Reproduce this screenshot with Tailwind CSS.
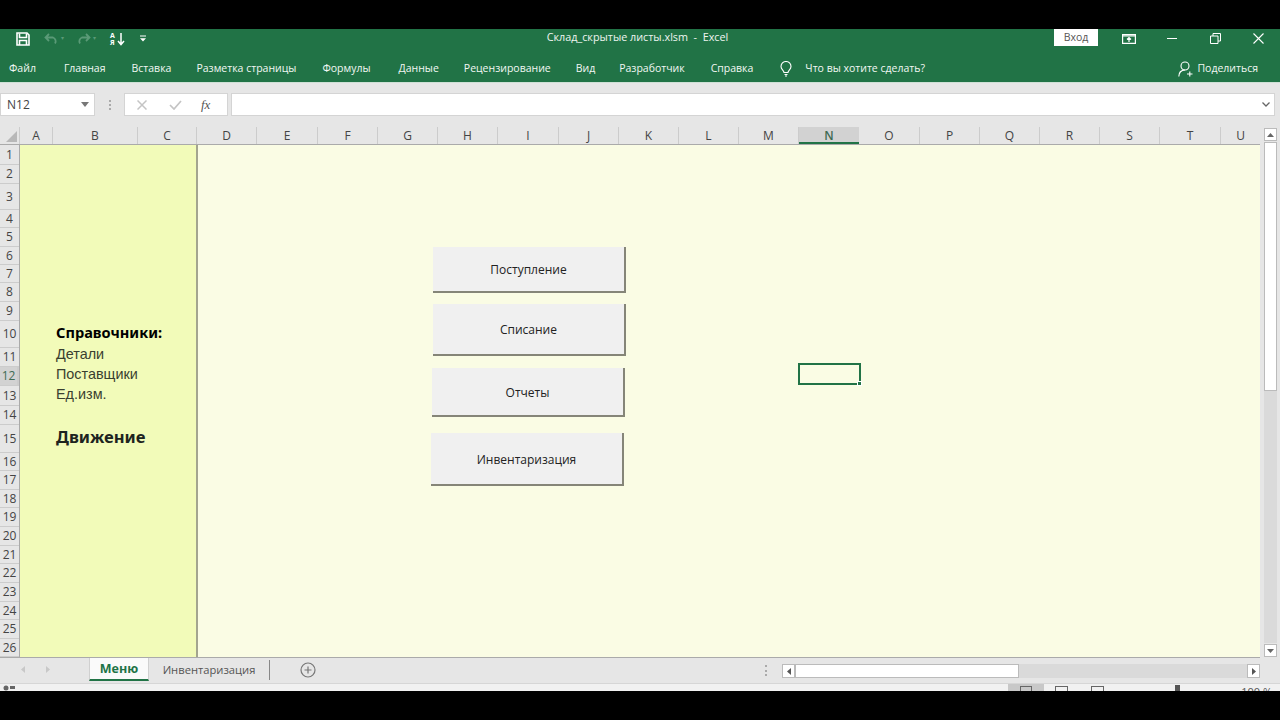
<!DOCTYPE html>
<html lang="ru">
<head>
<meta charset="utf-8"/>
<title>Склад_скрытые листы.xlsm - Excel</title>
<script src="https://cdn.jsdelivr.net/npm/@tailwindcss/browser@4"></script>
</head>
<body class="w-[1280px] h-[720px] overflow-hidden bg-black font-['Open_Sans',sans-serif]">
<div class="h-[29px] bg-black"></div>

<!-- title bar -->
<header class="h-[27px] bg-[#217346] text-white flex items-center relative pb-[9px] pt-[1px]">
  <div class="flex items-center w-[170px] pl-[16px] h-full">
    <svg class="w-[14px] h-[14px]" viewBox="0 0 14 14" fill="none" stroke="#fff" stroke-width="1.6"><path d="M1 1h10l2 2v10H1z"/><path d="M3.500 1.500v4h7v-4M3.500 13V8.500h7V13"/></svg>
    <svg class="w-[15px] h-[12px] ml-[14px]" viewBox="0 0 15 12" fill="none" stroke="#5a9a77" stroke-width="1.8"><path d="M5 1 1.500 4.500 5 8M2 4.500h7a4 4 0 0 1 2 6"/></svg>
    <span class="ml-[2px] text-[6px] text-[#5a9a77]">▾</span>
    <svg class="w-[15px] h-[12px] ml-[12px]" viewBox="0 0 15 12" fill="none" stroke="#5a9a77" stroke-width="1.8"><path d="M10 1l3.500 3.500L10 8M13 4.500H6a4 4 0 0 0-2 6"/></svg>
    <span class="ml-[2px] text-[6px] text-[#5a9a77]">▾</span>
    <div class="ml-[14px] flex items-center">
      <div class="flex flex-col text-[7px] leading-[7px] font-bold w-[7px]"><span>А</span><span>Я</span></div>
      <svg class="w-[8px] h-[14px]" viewBox="0 0 8 14" fill="none" stroke="#fff" stroke-width="1.5"><path d="M4 1v11M1 9l3 3.500L7 9"/></svg>
    </div>
    <svg class="w-[6px] h-[8px] ml-[15px]" viewBox="0 0 7 8" fill="#fff"><path d="M0 0h7v1.200H0zM0 3h7L3.500 7z"/></svg>
  </div>
  <div class="absolute left-0 top-0 w-[1275px] text-center text-[10.8px] text-[#eef5f0] pointer-events-none">Склад_скрытые листы.xlsm&nbsp; -&nbsp; Excel</div>
  <div class="ml-auto flex items-center h-full">
    <div class="w-[44px] h-[17px] self-start -mt-[1px] bg-white text-[#555] text-[10.5px] leading-[17px] text-center">Вход</div>
    <svg class="w-[14px] h-[10px] ml-[24px]" viewBox="0 0 14 10" fill="none" stroke="#fff" stroke-width="1.200"><path d="M.6.600h12.800v8.800H.6zM1 2h12"/><path d="M7 8V4M5 5.500 7 3.500l2 2"/></svg>
    <div class="w-[10px] h-px bg-white ml-[31px]"></div>
    <svg class="w-[11px] h-[11px] ml-[33px]" viewBox="0 0 11 11" fill="none" stroke="#fff"><path d="M.5 3h7.500v7.500H.5zM3 3V.5h7.500V8H8"/></svg>
    <svg class="w-[11px] h-[11px] ml-[32px] mr-[16px]" viewBox="0 0 11 11" stroke="#fff" stroke-width="1.100"><path d="M.5.500l10 10M10.500.500l-10 10"/></svg>
  </div>
</header>

<!-- ribbon tabs -->
<nav class="h-[26px] bg-[#217346] text-[#f1f7f3] text-[10.5px] flex items-center relative">
  <span class="ml-[9px]">Файл</span>
  <span class="ml-[28px]">Главная</span>
  <span class="ml-[26px]">Вставка</span>
  <span class="ml-[25px]">Разметка страницы</span>
  <span class="ml-[26px]">Формулы</span>
  <span class="ml-[28px]">Данные</span>
  <span class="ml-[25px]">Рецензирование</span>
  <span class="ml-[25px]">Вид</span>
  <span class="ml-[24px]">Разработчик</span>
  <span class="ml-[26px]">Справка</span>
  <svg class="w-[12px] h-[16px] ml-[27px]" viewBox="0 0 12 16" fill="none" stroke="#fff" stroke-width="1.100"><path d="M4 11.500C4 9.500 1 8.500 1 5.500a5 5 0 0 1 10 0c0 3-3 4-3 6zM4.500 13.500h3M5 15h2"/></svg>
  <span class="ml-[13px]">Что вы хотите сделать?</span>
  <div class="ml-auto mr-[22px] flex items-center gap-[4px]">
    <svg class="w-[15px] h-[16px]" viewBox="0 0 15 16" fill="none" stroke="#fff" stroke-width="1.100"><circle cx="7" cy="5" r="4"/><path d="M.8 15.500c0-4 2.500-6.500 6.200-6.500M9 13h5.500M11.800 10.500v5"/></svg>
    <span>Поделиться</span>
  </div>
</nav>

<!-- formula bar -->
<div class="h-[45px] bg-[#e6e6e6] flex items-start pt-[10px] border-t border-[#cfe0d6]">
  <div class="w-[95px] h-[23px] bg-white border border-[#d4d4d4] flex items-center justify-between pl-[6px] pr-[5px] text-[12px] text-[#444]">
    <span>N12</span>
    <svg class="w-[8px] h-[5px]" viewBox="0 0 8 5" fill="#777"><path d="M0 0h8L4 5z"/></svg>
  </div>
  <div class="w-[29px] h-[23px] flex flex-col items-center justify-center gap-[2px]">
    <i class="w-[2px] h-[2px] bg-[#aaa]"></i><i class="w-[2px] h-[2px] bg-[#aaa]"></i><i class="w-[2px] h-[2px] bg-[#aaa]"></i>
  </div>
  <div class="w-[104px] h-[23px] bg-white border border-[#d4d4d4] flex items-center">
    <svg class="w-[10px] h-[10px] ml-[12px]" viewBox="0 0 10 10" stroke="#c4c4c4" stroke-width="1.500"><path d="M.5.500l9 9M9.500.500l-9 9"/></svg>
    <svg class="w-[13px] h-[10px] ml-[22px]" viewBox="0 0 13 10" fill="none" stroke="#c4c4c4" stroke-width="1.700"><path d="M1 5l4 4 7-8"/></svg>
    <span class="ml-[19px] text-[13px] italic text-[#555] font-['Liberation_Serif',serif]">fx</span>
  </div>
  <div class="w-[1044px] h-[23px] ml-[3px] bg-white border border-[#d4d4d4] flex items-center justify-end pr-[4px]">
    <svg class="w-[8px] h-[5px]" viewBox="0 0 8 5" fill="none" stroke="#666" stroke-width="1.300"><path d="M.5.500 4 4 7.500.500"/></svg>
  </div>
</div>

<!-- sheet -->
<div class="h-[531px] bg-[#e6e6e6] flex relative text-[#444]">
  <div class="w-[1260px] shrink-0">
    <div class="h-[18px] flex text-[12px] leading-[17px] text-center border-b border-[#aaa]">
      <div class="w-[20px] relative border-r border-[#ccc]"><svg class="absolute right-[2px] bottom-[2px] w-[11px] h-[11px]" viewBox="0 0 11 11" fill="#b8b8b8"><path d="M11 0v11H0z"/></svg></div>
      <div class="w-[33px] border-r border-[#ccc]">A</div>
      <div class="w-[85px] border-r border-[#ccc]">B</div>
      <div class="w-[59px] border-r border-[#ccc]">C</div>
      <div class="w-[60px] border-r border-[#ccc]">D</div>
      <div class="w-[61px] border-r border-[#ccc]">E</div>
      <div class="w-[60px] border-r border-[#ccc]">F</div>
      <div class="w-[60px] border-r border-[#ccc]">G</div>
      <div class="w-[60px] border-r border-[#ccc]">H</div>
      <div class="w-[61px] border-r border-[#ccc]">I</div>
      <div class="w-[60px] border-r border-[#ccc]">J</div>
      <div class="w-[60px] border-r border-[#ccc]">K</div>
      <div class="w-[60px] border-r border-[#ccc]">L</div>
      <div class="w-[60px] border-r border-[#ccc]">M</div>
      <div class="w-[60px] bg-[#d2d2d2] text-[#3f6b52] font-semibold border-b-2 border-[#217346]">N</div>
      <div class="w-[61px] border-r border-[#ccc]">O</div>
      <div class="w-[60px] border-r border-[#ccc]">P</div>
      <div class="w-[60px] border-r border-[#ccc]">Q</div>
      <div class="w-[60px] border-r border-[#ccc]">R</div>
      <div class="w-[60px] border-r border-[#ccc]">S</div>
      <div class="w-[61px] border-r border-[#ccc]">T</div>
      <div class="w-[39px]">U</div>
    </div>
    <div class="h-[513px] flex border-b border-[#aaa]">
      <div class="w-[20px] shrink-0 text-[12px] text-center leading-none [&>div]:flex [&>div]:items-center [&>div]:justify-center [&>div]:border-b [&>div]:border-[#ccc] border-r border-[#aaa]">
        <div class="h-[20px]">1</div><div class="h-[19px]">2</div><div class="h-[26px]">3</div><div class="h-[18px]">4</div>
        <div class="h-[19px]">5</div><div class="h-[18px]">6</div><div class="h-[18px]">7</div><div class="h-[19px]">8</div>
        <div class="h-[19px]">9</div><div class="h-[27px]">10</div><div class="h-[19px]">11</div>
        <div class="h-[19px] bg-[#d2d2d2] text-[#3f6b52] border-r-2 border-r-[#217346]">12</div>
        <div class="h-[20px]">13</div><div class="h-[19px]">14</div><div class="h-[28px]">15</div><div class="h-[18px]">16</div>
        <div class="h-[19px]">17</div><div class="h-[18px]">18</div><div class="h-[19px]">19</div><div class="h-[19px]">20</div>
        <div class="h-[18px]">21</div><div class="h-[19px]">22</div><div class="h-[19px]">23</div><div class="h-[18px]">24</div>
        <div class="h-[19px]">25</div><div class="h-[18px]">26</div>
      </div>
      <div class="flex-1 flex bg-[#fafce4] relative">
        <aside class="w-[178px] h-full bg-[#f2fbb9] border-r-2 border-r-[#a3a58f] pl-[36px] pt-[176px] text-[#3a3f30]">
          <div class="h-[23px] font-['Noto_Sans',sans-serif] text-[14.6px] leading-[22px] font-bold text-black">Справочники:</div>
          <div class="h-[20px] font-['Liberation_Sans',sans-serif] text-[14.4px] leading-[20px]">Детали</div>
          <div class="h-[20px] font-['Liberation_Sans',sans-serif] text-[14.4px] leading-[20px]">Поставщики</div>
          <div class="h-[20px] font-['Liberation_Sans',sans-serif] text-[14.4px] leading-[20px]">Ед.изм.</div>
          <div class="mt-[21px] h-[24px] font-['Noto_Sans',sans-serif] text-[16.6px] leading-[24px] font-bold text-[#1d2420]">Движение</div>
        </aside>
        <!-- form buttons float over the sheet -->
        <div class="absolute left-[413px] top-[102px] w-[193px] h-[46px] pt-[1px] bg-[#f0f0f0] border-r-2 border-b-2 border-[#858578] flex items-center justify-center text-[12px] text-[#222]">Поступление</div>
        <div class="absolute left-[413px] top-[159px] w-[193px] h-[52px] pt-[1px] bg-[#f0f0f0] border-r-2 border-b-2 border-[#858578] flex items-center justify-center text-[12px] text-[#222]">Списание</div>
        <div class="absolute left-[412px] top-[223px] w-[193px] h-[49px] pt-[3px] bg-[#f0f0f0] border-r-2 border-b-2 border-[#858578] flex items-center justify-center text-[12px] text-[#222]">Отчеты</div>
        <div class="absolute left-[411px] top-[288px] w-[193px] h-[53px] pt-[3px] bg-[#f0f0f0] border-r-2 border-b-2 border-[#858578] flex items-center justify-center text-[12px] text-[#222]">Инвентаризация</div>
        <!-- active cell N12 -->
        <div class="absolute left-[778px] top-[218px] w-[63px] h-[22px] border-2 border-[#217346]">
          <i class="absolute -right-[3px] -bottom-[3px] w-[5px] h-[5px] bg-[#217346] border border-white"></i>
        </div>
      </div>
    </div>
  </div>
  <!-- vertical scrollbar -->
  <div class="w-[20px] flex flex-col items-end pr-[3px]">
    <div class="w-[13px] h-[13px] mt-[1px] bg-white border border-[#bbb] flex items-center justify-center"><svg class="w-[7px] h-[4px]" viewBox="0 0 7 4" fill="#666"><path d="M0 4h7L3.500 0z"/></svg></div>
    <div class="w-[13px] flex-1 bg-[#dadada] my-[1px]"><div class="h-[249px] bg-white border border-[#bbb]"></div></div>
    <div class="w-[13px] h-[13px] mb-[1px] bg-white border border-[#bbb] flex items-center justify-center"><svg class="w-[7px] h-[4px]" viewBox="0 0 7 4" fill="#666"><path d="M0 0h7L3.500 4z"/></svg></div>
  </div>
</div>

<!-- sheet tabs -->
<div class="h-[25px] bg-[#e6e6e6] flex items-start text-[11.2px]">
  <div class="w-[89px] h-[23px] flex items-center pl-[21px] gap-[21px]">
    <svg class="w-[4px] h-[7px]" viewBox="0 0 4 7" fill="#c8c8c8"><path d="M4 0v7L0 3.500z"/></svg>
    <svg class="w-[4px] h-[7px]" viewBox="0 0 4 7" fill="#c8c8c8"><path d="M0 0v7l4-3.500z"/></svg>
  </div>
  <div class="w-[60px] h-[23px] bg-[#fafafa] border-b-2 border-[#217346] border-x border-x-[#d0d0d0] text-[#217346] text-[12.5px] font-bold text-center leading-[22px]">Меню</div>
  <div class="w-[121px] h-[20px] mt-[2px] text-[#555] text-center leading-[20px] border-r border-[#888]">Инвентаризация</div>
  <svg class="w-[16px] h-[16px] ml-[30px] mt-[4px]" viewBox="0 0 16 16" fill="none" stroke="#777" stroke-width="1.200"><circle cx="8" cy="8" r="7"/><path d="M8 4.500v7M4.500 8h7"/></svg>
  <div class="ml-[449px] mt-[7px] w-[2px] h-[11px] border-l-2 border-dotted border-[#aaa]"></div>
  <div class="ml-[15px] mt-[6px] w-[478px] h-[14px] bg-[#dadada] flex">
    <div class="w-[13px] h-[14px] bg-white border border-[#bbb] flex items-center justify-center"><svg class="w-[4px] h-[7px]" viewBox="0 0 4 7" fill="#555"><path d="M4 0v7L0 3.500z"/></svg></div>
    <div class="w-[224px] h-[14px] bg-white border border-[#bbb]"></div>
    <div class="ml-auto w-[13px] h-[14px] bg-white border border-[#bbb] flex items-center justify-center"><svg class="w-[4px] h-[7px]" viewBox="0 0 4 7" fill="#555"><path d="M0 0v7l4-3.500z"/></svg></div>
  </div>
</div>

<!-- status bar, cut off by the black band -->
<div class="h-[8px] overflow-hidden bg-[#f1f1f1] border-t border-[#d6d6d6] flex relative text-[11px] text-[#555]">
  <svg class="w-[12px] h-[8px] ml-[3px]" viewBox="0 0 12 8" fill="#666"><circle cx="3" cy="4" r="2.500"/><path d="M7 2h5v3H7z"/></svg>
  <div class="ml-[993px] w-[36px] h-[8px] bg-[#c8c8c8] flex justify-center pt-[2px]"><i class="w-[12px] h-[10px] border border-[#666]"></i></div>
  <div class="ml-[11px] w-[13px] h-[10px] mt-[2px] border border-[#666]"></div>
  <div class="ml-[23px] w-[13px] h-[10px] mt-[2px] border border-[#666]"></div>
  <div class="ml-[71px] w-[5px] h-[8px] bg-[#555] mt-[1px]"></div>
  <span class="ml-auto mr-[8px] leading-[14px] mt-[1px]">100 %</span>
</div>
<div class="h-[29px] bg-black"></div>
</body>
</html>
